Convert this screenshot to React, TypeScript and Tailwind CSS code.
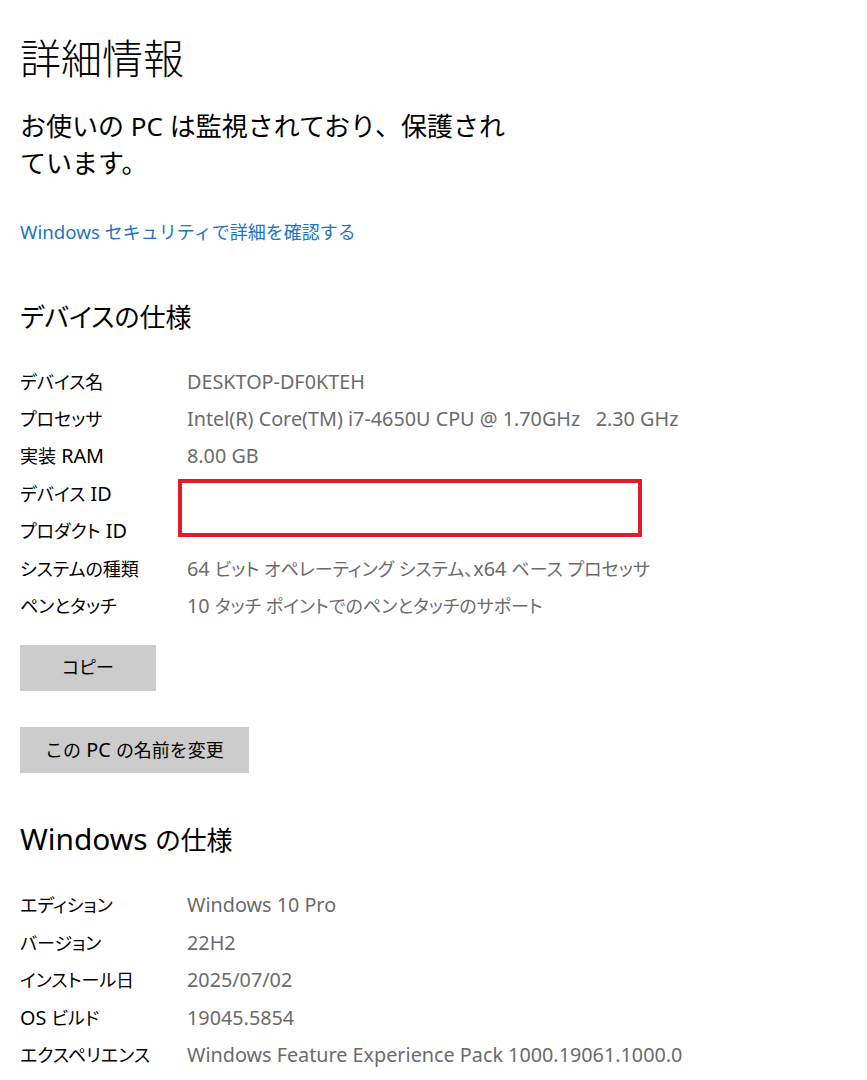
import React from "react";

const font = { fontFamily: '"Noto Sans", "Noto Sans CJK JP", sans-serif' };

const deviceRows: [string, string][] = [
  ["デバイス名", "DESKTOP-DF0KTEH"],
  ["プロセッサ", "Intel(R) Core(TM) i7-4650U CPU @ 1.70GHz   2.30 GHz"],
  ["実装 RAM", "8.00 GB"],
  ["デバイス ID", ""],
  ["プロダクト ID", ""],
  ["システムの種類", "64 ビット オペレーティング システム、x64 ベース プロセッサ"],
  ["ペンとタッチ", "10 タッチ ポイントでのペンとタッチのサポート"],
];

const winRows: [string, string][] = [
  ["エディション", "Windows 10 Pro"],
  ["バージョン", "22H2"],
  ["インストール日", "2025/07/02"],
  ["OS ビルド", "19045.5854"],
  ["エクスペリエンス", "Windows Feature Experience Pack 1000.19061.1000.0"],
];

function Mixed({ text, latin }: { text: string; latin: string }) {
  const parts = text.split(/([\x20-\x7E]+)/);
  return (
    <>
      {parts.map((p, i) =>
        /[A-Za-z0-9]/.test(p) ? (
          <span key={i} className={latin}>
            {p}
          </span>
        ) : (
          <React.Fragment key={i}>{p}</React.Fragment>
        )
      )}
    </>
  );
}

function Row({ label, value }: { label: string; value: string }) {
  return (
    <div className="flex h-[37.4px] items-center text-[18px] leading-[26px] [font-feature-settings:'palt']">
      <div className="w-[167px] shrink-0 text-black">
        <Mixed text={label} latin="text-[1.1em]" />
      </div>
      <div className="whitespace-pre text-[#6b6b6b]">
        <Mixed text={value} latin="text-[1.1em]" />
      </div>
    </div>
  );
}

export default function App() {
  return (
    <div className="min-h-[1080px] w-[867px] bg-white pl-[20px] text-black" style={font}>
      <h1 className="pt-[32px] text-[41px] font-light leading-[52px]">詳細情報</h1>
      <p className="mt-[24px] text-[26px] leading-[37px]">
        お使いの PC は監視されており、保護され
        <br />
        ています。
      </p>
      <a className="mt-[37px] block text-[18px] leading-[26px] text-[#1f74c0]" href="#">
        <Mixed text="Windows セキュリティで詳細を確認する" latin="text-[1.04em]" />
      </a>
      <h2 className="mt-[54px] text-[26px] font-normal leading-[36px] [font-feature-settings:'palt']">
        デバイスの仕様
      </h2>
      <div className="relative mt-[28px]">
        {deviceRows.map(([l, v]) => (
          <Row key={l} label={l} value={v} />
        ))}
        <div className="absolute left-[158px] top-[116px] h-[58px] w-[464px] border-[4px] border-[#e31b2a]" />
      </div>
      <button className="mt-[20px] block h-[46px] w-[136px] bg-[#cccccc] text-[18px] text-black [font-feature-settings:'palt']">
        コピー
      </button>
      <button className="mt-[36px] block h-[46px] w-[229px] bg-[#cccccc] text-[18px] text-black">
        <Mixed text="この PC の名前を変更" latin="text-[1.1em]" />
      </button>
      <h2 className="mt-[48px] text-[26px] font-normal leading-[36px] [font-feature-settings:'palt']">
        <Mixed text="Windows の仕様" latin="text-[1.15em]" />
      </h2>
      <div className="mt-[29px]">
        {winRows.map(([l, v]) => (
          <Row key={l} label={l} value={v} />
        ))}
      </div>
    </div>
  );
}
